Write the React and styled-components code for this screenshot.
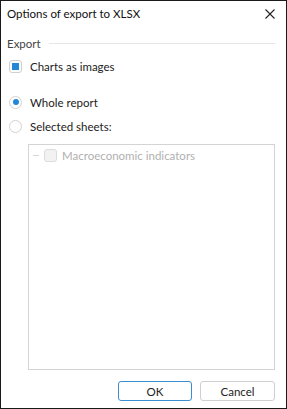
import styled, { createGlobalStyle } from 'styled-components';

const GlobalStyle = createGlobalStyle`
    html, body {
        margin: 0;
        padding: 0;
        background: #fff;
    }
    * {
        box-sizing: border-box;
    }
`;

const Dialog = styled.div`
    width: 287px;
    height: 409px;
    display: flex;
    flex-direction: column;
    border: 1px solid #1a1a1a;
    background: #fff;
    font-family: Lato, "Open Sans", sans-serif;
    font-size: 11.5px;
    color: #222;
`;

const TitleBar = styled.div`
    height: 25px;
    display: flex;
    align-items: center;
    justify-content: space-between;
    padding: 0 11px 0 6px;
`;

const Title = styled.span`
    font-size: 11.5px;
    color: #111;
`;

const CloseButton = styled.button`
    border: none;
    background: none;
    padding: 0;
    width: 10px;
    height: 10px;
    display: flex;
    cursor: pointer;
`;

const Body = styled.div`
    flex: 1;
    display: flex;
    flex-direction: column;
    padding: 7px 11px 7px 6px;
`;

const SectionHeader = styled.div`
    height: 20px;
    display: flex;
    align-items: center;
    gap: 8px;
    color: #444;

    &::after {
        content: '';
        flex: 1;
        height: 1px;
        background: #e6e6e6;
    }
`;

const OptionRow = styled.label`
    height: ${p => p.$height || 24}px;
    margin-top: ${p => p.$gap || 0}px;
    display: flex;
    align-items: center;
    gap: 8px;
    padding-left: ${p => p.$indent || 2}px;
    color: ${p => (p.$disabled ? '#aaa' : '#222')};
    cursor: default;
`;

const CheckBox = styled.span`
    width: 13px;
    height: 13px;
    flex: none;
    display: flex;
    align-items: center;
    justify-content: center;
    border: 1px solid ${p => (p.$disabled ? '#dcdcdc' : '#cfcfcf')};
    border-radius: 3px;
    background: ${p => (p.$disabled ? '#f2f2f2' : '#fff')};

    &::before {
        content: '';
        width: 7px;
        height: 7px;
        background: #2288d8;
        display: ${p => (p.$checked ? 'block' : 'none')};
    }
`;

const Radio = styled.span`
    width: 13px;
    height: 13px;
    flex: none;
    display: flex;
    align-items: center;
    justify-content: center;
    border: 1px solid #d2d2d2;
    border-radius: 50%;
    background: #fff;

    &::before {
        content: '';
        width: 6px;
        height: 6px;
        border-radius: 50%;
        background: #2288d8;
        display: ${p => (p.$checked ? 'block' : 'none')};
    }
`;

const TreeBox = styled.div`
    flex: 1;
    margin: 6px 0 0 21px;
    border: 1px solid #d4d4d4;
    padding: 0 4px;
`;

const TreeItem = styled.div`
    height: 20px;
    display: flex;
    align-items: center;
    color: #b0b0b0;

    &::before {
        content: '';
        width: 6px;
        height: 1px;
        background: #d8d8d8;
        margin-right: 5px;
    }
`;

const TreeLabel = styled.span`
    margin-left: 5px;
`;

const Footer = styled.div`
    display: flex;
    justify-content: flex-end;
    gap: 8px;
    margin-top: 11px;
`;

const Button = styled.button`
    width: ${p => p.$width || 75}px;
    height: 20px;
    padding: 0;
    border: 1px solid ${p => (p.$primary ? '#3b8ed0' : '#d0d0d0')};
    border-radius: 3px;
    background: #fff;
    font-family: inherit;
    font-size: 11.5px;
    color: #222;
`;

export default function App() {
    return (
        <>
            <GlobalStyle />
            <Dialog>
                <TitleBar>
                    <Title>Options of export to XLSX</Title>
                    <CloseButton aria-label="Close">
                        <svg width="10" height="10" viewBox="0 0 10 10">
                            <path d="M0.5 0.5 L9.5 9.5 M9.5 0.5 L0.5 9.5" stroke="#222" strokeWidth="1.1" />
                        </svg>
                    </CloseButton>
                </TitleBar>
                <Body>
                    <SectionHeader>Export</SectionHeader>
                    <OptionRow $height={22} $gap={2}>
                        <CheckBox $checked />
                        Charts as images
                    </OptionRow>
                    <OptionRow $gap={13}>
                        <Radio $checked />
                        Whole report
                    </OptionRow>
                    <OptionRow>
                        <Radio />
                        Selected sheets:
                    </OptionRow>
                    <TreeBox>
                        <TreeItem>
                            <CheckBox $disabled />
                            <TreeLabel>Macroeconomic indicators</TreeLabel>
                        </TreeItem>
                    </TreeBox>
                    <Footer>
                        <Button $primary $width={74}>OK</Button>
                        <Button $width={75}>Cancel</Button>
                    </Footer>
                </Body>
            </Dialog>
        </>
    );
}
